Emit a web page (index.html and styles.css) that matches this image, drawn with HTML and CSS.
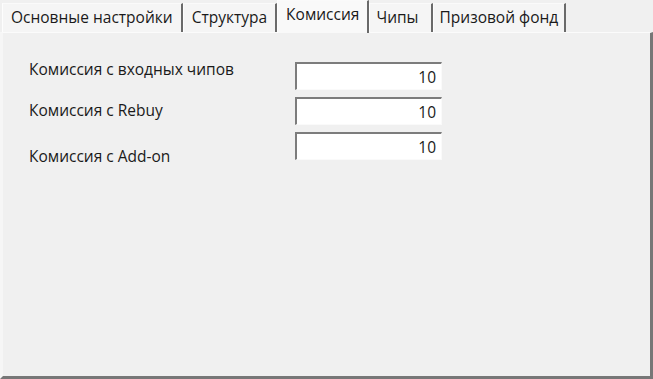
FILE: index.html
```html
<!DOCTYPE html>
<html lang="ru">
<head>
    <meta charset="UTF-8">
    <title>Настройки турнира</title>
    <link rel="stylesheet" href="styles.css">
</head>
<body>
    <div class="tabs">
        <div class="tab">Основные настройки</div>
        <div class="tab">Структура</div>
        <div class="tab active">Комиссия</div>
        <div class="tab chips">Чипы</div>
        <div class="tab prize">Призовой фонд</div>
    </div>

    <div class="panel">
        <div class="labels">
            <div class="label first">Комиссия с входных чипов</div>
            <div class="label second">Комиссия с Rebuy</div>
            <div class="label third">Комиссия с Add-on</div>
        </div>
        <div class="fields">
            <input class="field" type="text" value="10">
            <input class="field" type="text" value="10">
            <input class="field" type="text" value="10">
        </div>
    </div>
</body>
</html>
```

FILE: styles.css
```css
body {
    margin: 0;
    width: 653px;
    height: 379px;
    background-color: #f0f0f0;
    font-family: 'Open Sans', 'DejaVu Sans', sans-serif;
    font-size: 15.5px;
    color: #1a1a1a;
    display: flex;
    flex-direction: column;
    overflow: hidden;
}
.tabs {
    display: flex;
    height: 32px;
    padding-left: 2px;
    box-sizing: border-box;
    align-items: flex-end;
}
.tab {
    height: 29px;
    line-height: 27px;
    padding: 0 8px 0 8px;
    background-color: #f5f5f5;
    border-top: 1px solid #fafafa;
    border-left: 1px solid #fdfdfd;
    border-right: 2px solid #6a6a6a; /* тёмный разделитель вкладок */
    box-sizing: border-box;
    white-space: nowrap;
}
.tab.active {
    height: 33px;
    margin-bottom: -1px;
    padding: 0 8px;
    background-color: #f9f9f9;
    position: relative;
    z-index: 1;
}
.tab.chips {
    padding: 0 12px 0 6px;
}
.tab.prize {
    padding: 0 6px;
}
.panel {
    flex: 1;
    display: flex;
    padding: 28px 0 0 26px;
    border-top: 1px solid #fbfbfb;
    border-left: 3px solid #f6f6f6;
    border-right: 3px solid #777777;
    border-bottom: 3px solid #777777;
    box-sizing: border-box;
}
.labels {
    width: 266px;
    display: flex;
    flex-direction: column;
}
.label {
    height: 20px;
    line-height: 20px;
    white-space: nowrap;
}
.label.first {
    margin-top: -2px;
}
.label.second {
    margin-top: 21px;
}
.label.third {
    margin-top: 26px;
}
.fields {
    display: flex;
    flex-direction: column;
    gap: 7px;
    padding-top: 1px;
}
.field {
    width: 147px;
    height: 28px;
    margin: 0;
    padding: 0 5px 0 0;
    box-sizing: border-box;
    background-color: #ffffff;
    border-top: 2px solid #7c7c7c;
    border-left: 2px solid #7c7c7c;
    border-right: 1px solid #fafafa;
    border-bottom: 1px solid #fafafa;
    font-family: 'Open Sans', 'DejaVu Sans', sans-serif;
    font-size: 15.5px;
    color: #1a1a1a;
    text-align: right;
    outline: none;
}
```
